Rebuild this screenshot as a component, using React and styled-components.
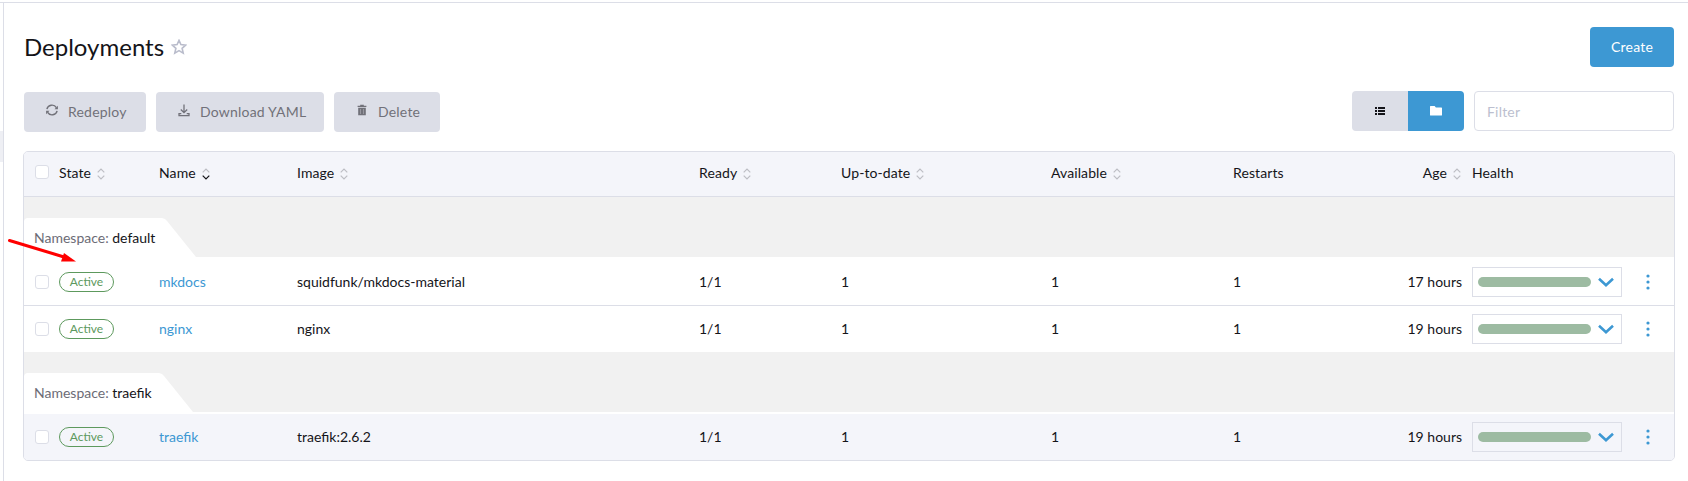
import React from "react";
import styled, { createGlobalStyle, css } from "styled-components";

const GlobalStyle = createGlobalStyle`
  * { box-sizing: border-box; }
  body {
    margin: 0;
    background: #fff;
    color: #141419;
    font: 14px/20px Lato, "Open Sans", sans-serif;
  }
`;

const Page = styled.div`
  position: relative;
  display: flex;
  height: 481px;
  padding-top: 2px;
  overflow: hidden;
`;

const SideNav = styled.nav`
  flex: 0 0 3px;
  border-top: 1px solid #dcdee7;
  padding-top: 128px;
`;

const SideNavItem = styled.div`
  height: 31px;
  background: #eeeff4;
`;

const Main = styled.main`
  flex: 1;
  min-width: 0;
  border-top: 1px solid #dcdee7;
  border-left: 1px solid #dcdee7;
  padding: 24px 13px 0 19px;
`;

const Header = styled.header`
  display: flex;
  justify-content: space-between;
  height: 40px;
  margin-right: 1px;
  padding-left: 1px;
`;

const Title = styled.h1`
  display: flex;
  align-items: center;
  gap: 7px;
  margin: 0;
  height: 39px;
  font-size: 24px;
  line-height: 30px;
  font-weight: 400;
`;

const Toolbar = styled.div`
  display: flex;
  align-items: flex-start;
  gap: 10px;
  margin: 24px 1px 0;
  height: 60px;
`;

const Button = styled.button`
  display: flex;
  align-items: center;
  justify-content: ${(p) => (p.$primary ? "center" : "flex-start")};
  width: ${(p) => p.$width}px;
  height: 40px;
  margin-top: ${(p) => (p.$primary ? 0 : 1)}px;
  padding: ${(p) => (p.$primary ? 0 : "0 0 0 20px")};
  border: 0;
  border-radius: 4px;
  background: ${(p) => (p.$primary ? "#3d98d3" : "#dcdee7")};
  color: ${(p) => (p.$primary ? "#fff" : "#717179")};
  font: 14px/20px Lato, sans-serif;
  letter-spacing: 0.2px;
`;

const ButtonIcon = styled.span`
  display: flex;
  justify-content: center;
  width: 16px;
  margin-right: 8px;
  margin-top: -4px;
`;

const Toggle = styled.div`
  display: flex;
  margin-left: auto;
  border-radius: 4px;
  overflow: hidden;
`;

const ToggleOption = styled.button`
  display: flex;
  align-items: center;
  justify-content: center;
  width: 56px;
  height: 40px;
  padding: 0;
  border: 0;
  background: ${(p) => (p.$on ? "#3d98d3" : "#dcdee7")};
  color: ${(p) => (p.$on ? "#fff" : "#141419")};
`;

const Filter = styled.input`
  width: 200px;
  height: 40px;
  padding: 0 12px;
  border: 1px solid #dcdee7;
  border-radius: 4px;
  font: 14px/20px Lato, sans-serif;
  letter-spacing: 0.2px;
  &::placeholder { color: #bcbfcf; opacity: 1; }
`;

const Table = styled.section`
  border: 1px solid #dcdee7;
  border-radius: 5px;
  overflow: hidden;
`;

const columns = css`
  display: grid;
  grid-template-columns: 35px 100px 138px 402px 142px 210px 182px 167px 72px 150px 1fr;
  align-items: center;
`;

const HeadRow = styled.div`
  ${columns}
  height: 45px;
  border-bottom: 1px solid #dcdee7;
  background: #f4f5fa;
`;

const HeadCell = styled.div`
  display: flex;
  align-items: center;
  gap: 6px;
  justify-content: ${(p) => (p.$right ? "flex-end" : "flex-start")};
  padding-right: ${(p) => (p.$right ? 11 : 0)}px;
  padding-bottom: 2px;
  letter-spacing: 0.1px;
  svg { position: relative; top: 1px; }
`;

const Row = styled.div`
  ${columns}
  height: ${(p) => p.$height}px;
  padding-top: ${(p) => p.$drop || 0}px;
  border-top: ${(p) => (p.$line ? "1px solid #dcdee7" : "0")};
  background: ${(p) => (p.$hover ? "#f4f5fa" : "#fff")};
`;

const Cell = styled.div`
  padding-bottom: 1px;
  padding-right: ${(p) => (p.$right ? 10 : 0)}px;
  text-align: ${(p) => (p.$right ? "right" : "left")};
  color: ${(p) => (p.$link ? "#3d98d3" : "inherit")};
`;

const Checkbox = styled.span`
  width: 14px;
  height: 14px;
  margin-left: 11px;
  margin-top: ${(p) => p.$shift || 0}px;
  border: 1px solid #dcdee7;
  border-radius: 3px;
  background: #fff;
`;

const Badge = styled.span`
  width: 55px;
  height: 20px;
  border: 1px solid #5d995d;
  border-radius: 10px;
  color: #5d995d;
  font-size: 12px;
  line-height: 18px;
  text-align: center;
`;

const GroupRow = styled.div`
  display: flex;
  align-items: flex-end;
  height: ${(p) => p.$height}px;
  border-bottom: ${(p) => p.$gap || 0}px solid #fff;
  background: #f1f1f1;
`;

const GroupTab = styled.div`
  height: 39px;
  width: ${(p) => p.$width}px;
  padding: 10px 0 0 10px;
  border-radius: 4px 0 0 0;
  background: #fff;
  clip-path: polygon(0 0, calc(100% - 34px) 0, calc(100% - 31px) 1px, calc(100% - 29px) 3px, 100% 100%, 0 100%);
  span { color: #6c6c76; }
`;

const Health = styled.div`
  display: flex;
  align-items: center;
  justify-content: space-between;
  height: 30px;
  padding: 0 7px 0 5px;
  border: 1px solid #dcdee7;
`;

const HealthBar = styled.span`
  width: 113px;
  height: 10px;
  border-radius: 5px;
  background: #9dbba2;
`;

const Menu = styled.span`
  display: flex;
  justify-content: center;
`;

const Pointer = styled.svg`
  position: absolute;
  left: 0;
  top: 230px;
`;

const Star = () => (
  <svg width="16" height="16" viewBox="0 0 16 16" fill="none" stroke="#b9bccb" strokeWidth="1.6">
    <path d="M8 1.4 9.9 5.6l4.8.5-3.6 3.2 1.1 4.8L8 11.6l-4.2 2.5 1.1-4.8L1.3 6.1l4.8-.5z" />
  </svg>
);

const RefreshIcon = () => (
  <svg width="14" height="14" viewBox="0 0 14 14" fill="none" stroke="currentColor" strokeWidth="1.4">
    <path d="M1.900 6.200A5.200 5.200 0 0 1 11.400 4.600M12.100 7.800A5.200 5.200 0 0 1 2.600 9.400" />
    <path d="M12.900 2.800v3.400H9.500zM1.100 11.200V7.800h3.400z" fill="currentColor" stroke="none" />
  </svg>
);

const DownloadIcon = () => (
  <svg width="12" height="13" viewBox="0 0 12 13" fill="none" stroke="currentColor" strokeWidth="1.3">
    <path d="M6 .5v8M2.800 5.500 6 8.600l3.200-3.100M3.300 9.700H1v2h10v-2H8.700" />
  </svg>
);

const TrashIcon = () => (
  <svg width="10" height="12" viewBox="0 0 10 12" fill="currentColor">
    <path d="M3.2.8h3.6v1H9.4v1.3H.6V1.8h2.6zM1.2 3.8h7.6v7.4H1.2z" />
    <path d="M3.5 5v5M6.5 5v5" stroke="#a7a8b0" strokeWidth=".7" />
  </svg>
);

const ListIcon = () => (
  <svg width="10" height="8" viewBox="0 0 10 8" fill="currentColor">
    <path d="M0 0h2v2H0zM3 0h7v2H3zM0 3h2v2H0zM3 3h7v2H3zM0 6h2v2H0zM3 6h7v2H3z" />
  </svg>
);

const FolderIcon = () => (
  <svg width="12" height="10" viewBox="0 0 12 10" fill="currentColor">
    <path d="M.6 0h4l1.3 1.5h5.5q.6 0 .6.6v6.8q0 .6-.6.6H.6Q0 9.500 0 8.900V.6Q0 0 .6 0z" />
  </svg>
);

const SortIcon = ({ active }) => (
  <svg width="8" height="12" viewBox="0 0 8 12" fill="none" strokeWidth="1.2">
    <path d="M.7 4.300 4 1l3.300 3.300" stroke="#bdbec4" />
    <path d="M.7 7.700 4 11l3.300-3.300" stroke={active ? "#141419" : "#bdbec4"} />
  </svg>
);

const ChevronIcon = () => (
  <svg width="16" height="10" viewBox="0 0 16 10" fill="none" stroke="#3d98d3" strokeWidth="2.6">
    <path d="M1 1.700 8 8.200l7-6.500" />
  </svg>
);

const DotsIcon = () => (
  <svg width="4" height="16" viewBox="0 0 4 16" fill="#3d98d3">
    <circle cx="2" cy="2" r="1.600" />
    <circle cx="2" cy="8" r="1.600" />
    <circle cx="2" cy="14" r="1.600" />
  </svg>
);

const headings = [
  { label: "State", sort: true },
  { label: "Name", sort: true, active: true },
  { label: "Image", sort: true },
  { label: "Ready", sort: true },
  { label: "Up-to-date", sort: true },
  { label: "Available", sort: true },
  { label: "Restarts" },
  { label: "Age", sort: true, right: true },
  { label: "Health" },
];

function Deployment({ name, image, age, ...row }) {
  return (
    <Row {...row}>
      <Checkbox />
      <Badge>Active</Badge>
      <Cell $link>{name}</Cell>
      <Cell>{image}</Cell>
      <Cell>1/1</Cell>
      <Cell>1</Cell>
      <Cell>1</Cell>
      <Cell>1</Cell>
      <Cell $right>{age}</Cell>
      <Health>
        <HealthBar />
        <ChevronIcon />
      </Health>
      <Menu><DotsIcon /></Menu>
    </Row>
  );
}

export default function App() {
  return (
    <>
      <GlobalStyle />
      <Page>
        <SideNav><SideNavItem /></SideNav>
        <Main>
          <Header>
            <Title>Deployments <Star /></Title>
            <Button $primary $width={84}>Create</Button>
          </Header>
          <Toolbar>
            <Button $width={122}><ButtonIcon><RefreshIcon /></ButtonIcon>Redeploy</Button>
            <Button $width={168}><ButtonIcon><DownloadIcon /></ButtonIcon>Download YAML</Button>
            <Button $width={106}><ButtonIcon><TrashIcon /></ButtonIcon>Delete</Button>
            <Toggle>
              <ToggleOption><ListIcon /></ToggleOption>
              <ToggleOption $on><FolderIcon /></ToggleOption>
            </Toggle>
            <Filter placeholder="Filter" />
          </Toolbar>
          <Table>
            <HeadRow>
              <Checkbox $shift={-4} />
              {headings.map((h) => (
                <HeadCell key={h.label} $right={h.right}>
                  {h.label}
                  {h.sort && <SortIcon active={h.active} />}
                </HeadCell>
              ))}
            </HeadRow>
            <GroupRow $height={60}>
              <GroupTab $width={172}><span>Namespace:</span> default</GroupTab>
            </GroupRow>
            <Deployment $height={48} $drop={2} name="mkdocs" image="squidfunk/mkdocs-material" age="17 hours" />
            <Deployment $height={47} $line name="nginx" image="nginx" age="19 hours" />
            <GroupRow $height={62} $gap={2}>
              <GroupTab $width={169}><span>Namespace:</span> traefik</GroupTab>
            </GroupRow>
            <Deployment $height={46} $hover name="traefik" image="traefik:2.6.2" age="19 hours" />
          </Table>
        </Main>
        <Pointer width="84" height="40" viewBox="0 230 84 40">
          <path d="M9.500 240.500 64 257" stroke="#f00" strokeWidth="3" strokeLinecap="round" />
          <path d="M76 261.500 61 261.500 64 253z" fill="#f00" />
        </Pointer>
      </Page>
    </>
  );
}
